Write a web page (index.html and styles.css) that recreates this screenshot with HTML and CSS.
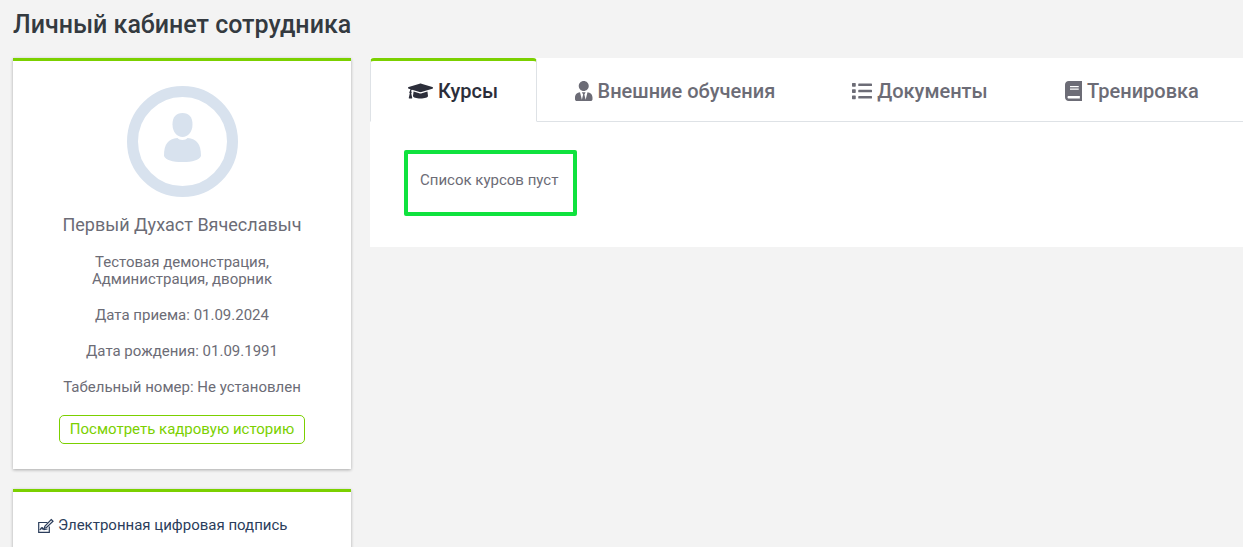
FILE: index.html
```html
<!DOCTYPE html>
<html lang="ru">
<head>
  <meta charset="UTF-8">
  <meta name="viewport" content="width=device-width, initial-scale=1.0">
  <title>Личный кабинет сотрудника</title>
  <link rel="stylesheet" href="styles.css">
</head>
<body>
  <h1>Личный кабинет сотрудника</h1>

  <div class="layout">
    <aside class="sidebar">
      <section class="card profile">
        <svg class="avatar" viewBox="0 0 111 111" aria-hidden="true">
          <circle cx="55.500" cy="55.500" r="50" fill="none" stroke="currentColor" stroke-width="11"/>
          <path fill="currentColor" d="M55.500 27C62 27 65.500 31 65.500 38.500C65.500 46 61 51 55.500 51S45.500 46 45.500 38.500C45.500 31 49 27 55.500 27Z"/>
          <path fill="currentColor" d="M50.500 52C52 54.600 59 54.600 60.500 52C70 53 74 58 74 70C72 74 66 76 55.500 76S39 74 37 70C37 58 41 53 50.500 52Z"/>
        </svg>
        <h2>Первый Духаст Вячеславыч</h2>
        <p>Тестовая демонстрация,<br>Администрация, дворник</p>
        <p>Дата приема: 01.09.2024</p>
        <p>Дата рождения: 01.09.1991</p>
        <p>Табельный номер: Не установлен</p>
        <button type="button" class="btn-outline">Посмотреть кадровую историю</button>
      </section>

      <section class="card menu">
        <a href="#signature">
          <svg class="icon-sign" viewBox="0 0 16 16" fill="none" stroke="currentColor" stroke-width="1.2" aria-hidden="true">
            <path d="M9.500 4.500H.7V14.300H11.300V8.500M2 12C3.500 9 5 8.500 4 11.500C5 10 5.500 11 6 11.500L9.500 11"/>
            <path d="M13.200 1.500L15 3.200L8.500 9.500L6 10.500L7 8Z"/>
          </svg>
          <span>Электронная цифровая подпись</span>
        </a>
      </section>
    </aside>

    <main class="content">
      <nav class="tabs">
        <a href="#courses" class="tab active">
          <svg viewBox="0 0 640 512" aria-hidden="true"><path d="M622.34 153.200L343.400 67.500c-15.200-4.670-31.600-4.670-46.790 0L17.660 153.200c-23.540 7.230-23.540 38.360 0 45.590l48.630 14.940c-10.670 13.190-17.230 29.280-17.880 46.900C38.780 266.150 32 276.110 32 288c0 10.780 5.680 19.850 13.860 25.650L20.330 428.530C18.110 438.520 25.710 448 35.940 448h56.110c10.240 0 17.840-9.480 15.620-19.470L82.140 313.650C90.320 307.850 96 298.780 96 288c0-11.570-6.470-21.250-15.660-26.870.76-15.020 8.440-28.300 20.690-36.720L296.600 284.500c9.060 2.780 26.440 6.250 46.790 0l278.950-85.700c23.550-7.240 23.550-38.360 0-45.600zM352.790 315.090c-28.530 8.760-52.840 3.920-65.590 0l-145.020-44.550L128 384c0 35.350 85.960 64 192 64s192-28.650 192-64l-14.180-113.470-145.030 44.560z"/></svg>
          Курсы
        </a>
        <a href="#external" class="tab">
          <svg viewBox="0 0 448 512" aria-hidden="true"><path d="M224 256c70.700 0 128-57.300 128-128S294.700 0 224 0 96 57.300 96 128s57.300 128 128 128zm95.800 32.600L272 480l-32-136 32-56h-96l32 56-32 136-47.800-191.400C56.900 292 0 350.300 0 422.400V464c0 26.500 21.500 48 48 48h352c26.500 0 48-21.500 48-48v-41.600c0-72.100-56.900-130.400-128.200-133.800z"/></svg>
          Внешние обучения
        </a>
        <a href="#documents" class="tab">
          <svg viewBox="0 0 512 512" aria-hidden="true"><path d="M80 368H16a16 16 0 0 0-16 16v64a16 16 0 0 0 16 16h64a16 16 0 0 0 16-16v-64a16 16 0 0 0-16-16zm0-320H16A16 16 0 0 0 0 64v64a16 16 0 0 0 16 16h64a16 16 0 0 0 16-16V64a16 16 0 0 0-16-16zm0 160H16a16 16 0 0 0-16 16v64a16 16 0 0 0 16 16h64a16 16 0 0 0 16-16v-64a16 16 0 0 0-16-16zm416 176H176a16 16 0 0 0-16 16v32a16 16 0 0 0 16 16h320a16 16 0 0 0 16-16v-32a16 16 0 0 0-16-16zm0-320H176a16 16 0 0 0-16 16v32a16 16 0 0 0 16 16h320a16 16 0 0 0 16-16V80a16 16 0 0 0-16-16zm0 160H176a16 16 0 0 0-16 16v32a16 16 0 0 0 16 16h320a16 16 0 0 0 16-16v-32a16 16 0 0 0-16-16z"/></svg>
          Документы
        </a>
        <a href="#training" class="tab">
          <svg viewBox="0 0 448 512" aria-hidden="true"><path d="M448 360V24c0-13.300-10.700-24-24-24H96C43 0 0 43 0 96v320c0 53 43 96 96 96h328c13.300 0 24-10.700 24-24v-16c0-7.500-3.500-14.300-8.900-18.700-4.200-15.400-4.200-59.300 0-74.700 5.400-4.300 8.900-11.100 8.900-18.600zM128 134c0-3.300 2.700-6 6-6h212c3.300 0 6 2.700 6 6v20c0 3.300-2.700 6-6 6H134c-3.300 0-6-2.700-6-6v-20zm0 64c0-3.300 2.700-6 6-6h212c3.300 0 6 2.700 6 6v20c0 3.300-2.700 6-6 6H134c-3.300 0-6-2.700-6-6v-20zm253.400 250H96c-17.700 0-32-14.300-32-32 0-17.600 14.400-32 32-32h285.400c-1.900 17.100-1.900 46.900 0 64z"/></svg>
          Тренировка
        </a>
      </nav>
      <div class="tab-panel">
        <p class="empty">Список курсов пуст</p>
      </div>
    </main>
  </div>
</body>
</html>
```
FILE: styles.css
```css
* {
  box-sizing: border-box;
}

body {
  margin: 0;
  padding: 8px 0 0 13px;
  background: #f3f3f3;
  color: #6c6c76;
  font-family: Roboto, sans-serif;
  font-size: 15px;
  line-height: 17px;
}

h1 {
  margin: 0 0 16px;
  color: #343a40;
  font-size: 25px;
  font-weight: 500;
  line-height: 34px;
}

.layout {
  display: flex;
  align-items: flex-start;
  gap: 19px;
}

.sidebar {
  flex: 0 0 338px;
}

.card {
  margin-bottom: 20px;
  padding: 25px;
  background: #fff;
  border-top: 3px solid #7bd000;
  box-shadow: 0 1px 3px rgba(0, 0, 0, 0.3);
}

.profile {
  text-align: center;
}

.avatar {
  display: block;
  width: 111px;
  height: 111px;
  margin: 0 auto 16px;
  color: #d8e2ee;
}

.profile h2 {
  margin: 0 0 17px;
  font-size: 18px;
  font-weight: 400;
  line-height: 24px;
}

.profile p {
  margin: 0 0 19px;
}

.btn-outline {
  display: inline-block;
  padding: 5px 10px;
  background: #fff;
  border: 1px solid #7bd000;
  border-radius: 5px;
  color: #7bd000;
  font: inherit;
  cursor: pointer;
}

.menu {
  margin-bottom: 0;
}

.menu a {
  display: flex;
  align-items: flex-end;
  gap: 4px;
  color: #2b3d5b;
  text-decoration: none;
}

.icon-sign {
  width: 16px;
  height: 16px;
}

.content {
  flex: 1;
  min-width: 0;
  background: #fff;
}

.tabs {
  display: flex;
  border-bottom: 1px solid #dee2e6;
}

.tab {
  display: flex;
  align-items: center;
  gap: 5px;
  margin-bottom: -1px;
  padding: 18px 38px 18px 37px;
  border: 1px solid transparent;
  border-top-width: 3px;
  border-radius: 4px 4px 0 0;
  color: #6c6c76;
  font-size: 20px;
  font-weight: 500;
  line-height: 24px;
  text-decoration: none;
  white-space: nowrap;
}

.tab svg {
  height: 20px;
  fill: currentColor;
}

.tab.active {
  background: #fff;
  border-color: #7bd000 #dee2e6 #fff;
  color: #2c2e3a;
}

.tab-panel {
  padding: 28px 34px 31px;
}

.empty {
  display: inline-block;
  margin: 0;
  padding: 18px 15px 23px 12px;
  border: 4px solid #10e23e;
  border-radius: 2px;
  vertical-align: top;
}
```
